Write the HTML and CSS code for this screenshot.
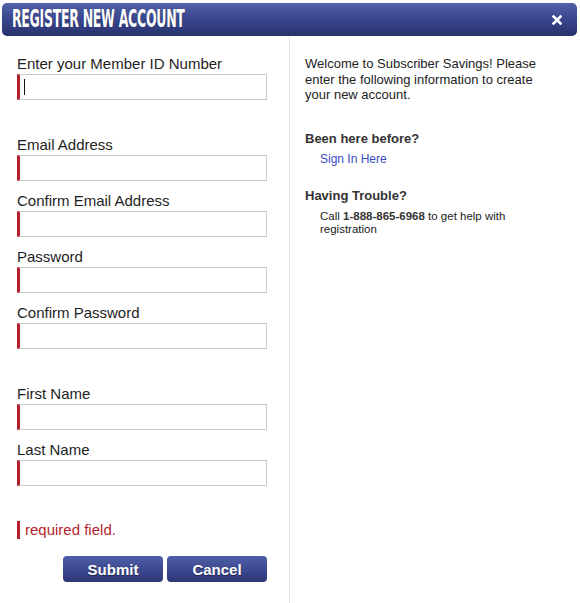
FILE: index.html
```html
<!DOCTYPE html>
<html>
<head>
<meta charset="utf-8">
<title>Register New Account</title>
<link rel="stylesheet" href="styles.css">
</head>
<body>
<div class="dialog">
  <div class="header">
    <h1 class="title">REGISTER NEW ACCOUNT</h1>
    <svg class="close" width="10" height="10" viewBox="0 0 10 10"><path d="M1.5 1.5 L8.5 8.5 M8.5 1.5 L1.5 8.5" stroke="#fff" stroke-width="2.6" stroke-linecap="square"/></svg>
  </div>
  <div class="content">
    <form class="form-col">
      <div class="group">
        <div class="field">
          <label class="label">Enter your Member ID Number</label>
          <div class="input-wrap"><input class="input" type="text"><span class="caret"></span></div>
        </div>
      </div>
      <div class="group">
        <div class="field">
          <label class="label">Email Address</label>
          <div class="input-wrap"><input class="input" type="text"></div>
        </div>
        <div class="field">
          <label class="label">Confirm Email Address</label>
          <div class="input-wrap"><input class="input" type="text"></div>
        </div>
        <div class="field">
          <label class="label">Password</label>
          <div class="input-wrap"><input class="input" type="password"></div>
        </div>
        <div class="field">
          <label class="label">Confirm Password</label>
          <div class="input-wrap"><input class="input" type="password"></div>
        </div>
      </div>
      <div class="group">
        <div class="field">
          <label class="label">First Name</label>
          <div class="input-wrap"><input class="input" type="text"></div>
        </div>
        <div class="field">
          <label class="label">Last Name</label>
          <div class="input-wrap"><input class="input" type="text"></div>
        </div>
      </div>
      <div class="required">required field.</div>
      <div class="buttons">
        <button type="button" class="btn">Submit</button>
        <button type="button" class="btn">Cancel</button>
      </div>
    </form>
    <div class="info-col">
      <p class="welcome">Welcome to Subscriber Savings! Please enter the following information to create your new account.</p>
      <h2 class="info-head first">Been here before?</h2>
      <a class="info-link" href="#">Sign In Here</a>
      <h2 class="info-head">Having Trouble?</h2>
      <p class="info-text">Call <b>1-888-865-6968</b> to get help with registration</p>
    </div>
  </div>
</div>
</body>
</html>
```
FILE: styles.css
```css
* { box-sizing: border-box; }
html, body { margin: 0; padding: 0; background: #fff; }
body { font-family: "Liberation Sans", Arial, Helvetica, sans-serif; color: #222; }

.dialog { width: 580px; height: 603px; display: flex; flex-direction: column; }

.header {
  margin: 3px 3px 0 2px;
  height: 33px;
  border-radius: 5px;
  background: linear-gradient(to bottom, #5261a8 0%, #3b4890 45%, #27326c 100%);
  display: flex;
  align-items: center;
  justify-content: space-between;
  padding: 0 15px 0 10px;
  flex: none;
}
.title {
  margin: 0;
  font-family: "Liberation Sans Narrow", "DejaVu Sans Condensed", "Liberation Sans", sans-serif;
  font-weight: bold;
  font-size: 24px;
  line-height: 33px;
  color: #fff;
  letter-spacing: -0.5px;
  transform: scaleX(0.58);
  transform-origin: left center;
  white-space: nowrap;
  text-shadow: 0 0 1px rgba(0,0,0,0.4);
}
.close { display: block; }

.content { flex: 1; display: flex; }

.form-col {
  width: 290px;
  flex: none;
  border-right: 1px solid #e4e4e4;
  padding: 18px 0 0 17px;
  margin: 0;
}
.group + .group { margin-top: 35px; }
.field { margin-bottom: 10px; width: 250px; }
.label {
  display: block;
  font-size: 15px;
  line-height: 20px;
  margin-bottom: 0;
  color: #1e1e1e;
}
.input-wrap { position: relative; }
.input {
  display: block;
  width: 250px;
  height: 26px;
  margin: 0;
  border: 1px solid #c9c9c9;
  border-left: 3px solid #b41f2e;
  background: #fff;
  outline: none;
  padding: 0 6px;
  font: 15px "Liberation Sans", Arial, sans-serif;
}
.caret {
  position: absolute;
  left: 7px;
  top: 5px;
  width: 1px;
  height: 16px;
  background: #111;
}
.required {
  margin-top: 35px;
  border-left: 3px solid #b41f2e;
  padding-left: 5px;
  font-size: 15px;
  line-height: 18px;
  color: #b41f2e;
  width: 250px;
}
.buttons {
  margin-top: 17px;
  width: 250px;
  display: flex;
  justify-content: flex-end;
  gap: 4px;
}
.btn {
  width: 100px;
  height: 26px;
  border: none;
  border-radius: 4px;
  background: linear-gradient(to bottom, #4f5ea6 0%, #3d4a92 50%, #2c3776 100%);
  color: #fff;
  font: bold 15px "Liberation Sans", Arial, sans-serif;
  text-shadow: 0 1px 1px rgba(0,0,0,0.45);
  padding: 0;
  cursor: pointer;
}

.info-col {
  padding: 20px 0 0 15px;
  font-size: 13px;
  color: #222;
}
.welcome {
  margin: 0;
  width: 240px;
  line-height: 15.5px;
}
.info-head {
  margin: 21px 0 0 0;
  font-size: 13px;
  line-height: 15px;
  font-weight: bold;
  color: #333;
}
.info-head.first { margin-top: 28px; }
.info-link {
  display: block;
  margin: 6px 0 0 15px;
  line-height: 15px;
  color: #3a4cc4;
  text-decoration: none;
  font-size: 12px;
}
.info-text {
  margin: 7px 0 0 15px;
  font-size: 11.5px;
  line-height: 13px;
  width: 200px;
  color: #222;
}
.info-text b { color: #333; }
```
